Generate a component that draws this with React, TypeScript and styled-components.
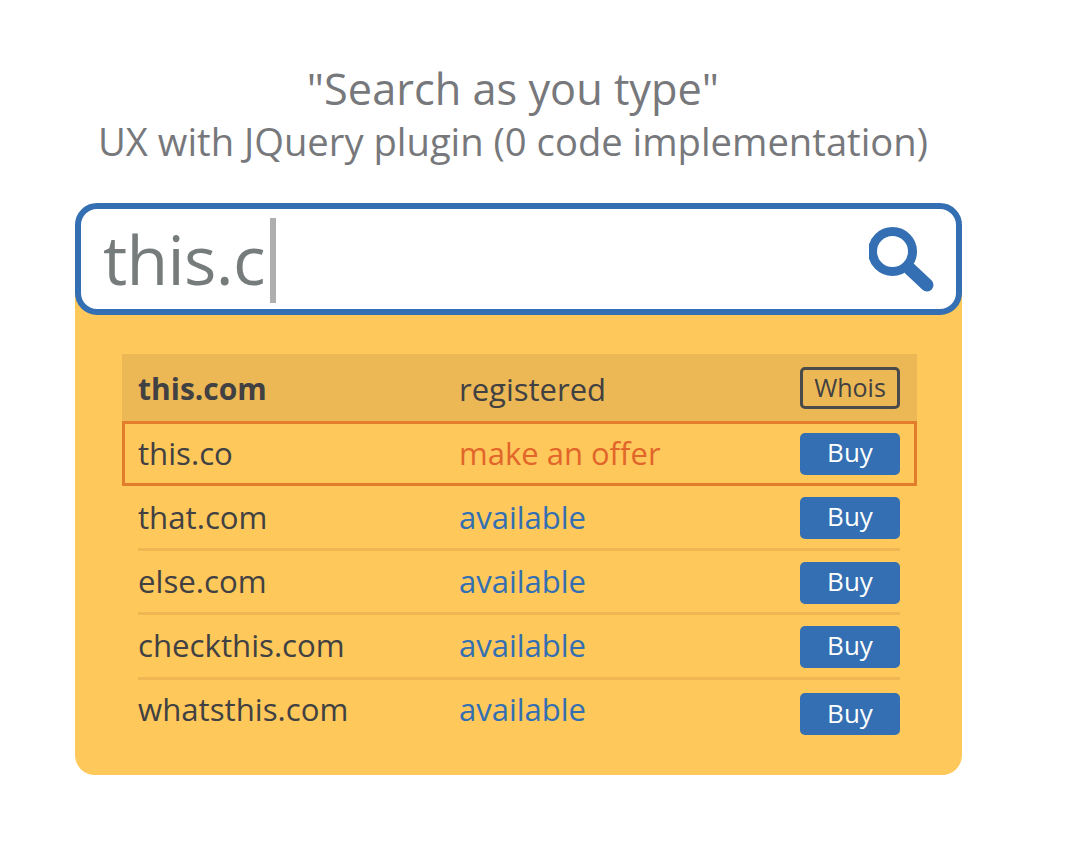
import styled, { createGlobalStyle } from "styled-components";

const GlobalStyle = createGlobalStyle`
  html, body {
    margin: 0;
    padding: 0;
    background: #ffffff;
  }
  body {
    font-family: "Open Sans", "Noto Sans", sans-serif;
  }
`;

const rows = [
  { domain: "that.com", nudge: 1 },
  { domain: "else.com", nudge: 2 },
  { domain: "checkthis.com", nudge: 2 },
  { domain: "whatsthis.com", nudge: 5 },
];

const SearchIcon = () => (
  <svg width="68" height="68" viewBox="0 0 68 68" fill="none">
    <circle cx="23.5" cy="26.5" r="20" stroke="#336fb2" strokeWidth="9" />
    <path d="M41 44 L58 60" stroke="#336fb2" strokeWidth="13" strokeLinecap="round" />
  </svg>
);

const App = () => {
  return (
    <Page>
      <GlobalStyle />
      <Header>
        <Title>"Search as you type"</Title>
        <Subtitle>UX with JQuery plugin (0 code implementation)</Subtitle>
      </Header>
      <Widget>
        <SearchBox>
          <Query>this.c</Query>
          <Caret />
          <IconSlot>
            <SearchIcon />
          </IconSlot>
        </SearchBox>
        <Dropdown>
          <Results>
            <TakenRow>
              <Domain $bold>this.com</Domain>
              <Status>registered</Status>
              <WhoisButton>Whois</WhoisButton>
            </TakenRow>
            <OfferRow>
              <Domain>this.co</Domain>
              <Status $color="#e2652a">make an offer</Status>
              <BuyButton $nudge={1}>Buy</BuyButton>
            </OfferRow>
            {rows.map((row, i) => (
              <Row key={row.domain} $last={i === rows.length - 1}>
                <Domain>{row.domain}</Domain>
                <Status $color="#336fb2">available</Status>
                <BuyButton $nudge={row.nudge}>Buy</BuyButton>
              </Row>
            ))}
          </Results>
        </Dropdown>
      </Widget>
    </Page>
  );
};

export default App;

const Page = styled.div`
  width: 1067px;
  height: 852px;
  overflow: hidden;
  padding: 61px 105px 0 75px;
  box-sizing: border-box;
  background: #ffffff;
`;

const Header = styled.div`
  display: flex;
  flex-direction: column;
  align-items: center;
  color: #77787b;
  padding-right: 11px;
  height: 142px;
`;

const Title = styled.div`
  font-size: 43.3px;
  line-height: 56px;
  white-space: nowrap;
`;

const Subtitle = styled.div`
  font-size: 38.2px;
  line-height: 48px;
  white-space: nowrap;
`;

const Widget = styled.div`
  width: 887px;
`;

const SearchBox = styled.div`
  position: relative;
  z-index: 1;
  display: flex;
  align-items: center;
  height: 112px;
  box-sizing: border-box;
  padding-left: 22px;
  background: #ffffff;
  border: 6px solid #336fb2;
  border-radius: 22px;
`;

const Query = styled.div`
  font-size: 68px;
  line-height: 1;
  color: #767b7c;
  letter-spacing: -0.7px;
`;

const Caret = styled.div`
  width: 6px;
  height: 85px;
  margin: 2px 0 0 5px;
  background: #aeaeae;
`;

const IconSlot = styled.div`
  display: flex;
  margin-left: auto;
  margin-right: 19px;
`;

const Dropdown = styled.div`
  margin-top: -56px;
  height: 516px;
  box-sizing: border-box;
  padding: 95px 45px 0 47px;
  background: #fec85a;
  border-radius: 0 0 20px 20px;
`;

const Results = styled.div`
  display: flex;
  flex-direction: column;
`;

const rowGrid = `
  display: grid;
  grid-template-columns: 322px 1fr 100px;
  align-items: center;
  box-sizing: border-box;
`;

const TakenRow = styled.div`
  ${rowGrid}
  height: 67px;
  padding: 2px 17px 0 16px;
  background: #ecb855;
`;

const OfferRow = styled.div`
  ${rowGrid}
  height: 65px;
  padding: 0 14px 2px 13px;
  border: 3px solid #e27d2b;
`;

const Row = styled.div<{ $last?: boolean }>`
  ${rowGrid}
  position: relative;
  height: 64.2px;
  margin: 0 17px 0 16px;
  padding-bottom: 3px;

  &::after {
    content: "";
    display: ${(p) => (p.$last ? "none" : "block")};
    position: absolute;
    left: 0;
    right: 0;
    bottom: -1px;
    height: 3px;
    background: #efb653;
  }
`;

const Domain = styled.div<{ $bold?: boolean }>`
  font-size: ${(p) => (p.$bold ? 30 : 31.2)}px;
  font-weight: ${(p) => (p.$bold ? 700 : 400)};
  color: #414042;
`;

const Status = styled.div<{ $color?: string }>`
  font-size: 31px;
  margin-left: -1px;
  color: ${(p) => p.$color || "#414042"};
`;

const BuyButton = styled.div<{ $nudge?: number }>`
  display: flex;
  align-items: center;
  justify-content: center;
  height: 42px;
  margin-top: ${(p) => (p.$nudge || 0) * 2}px;
  padding-bottom: 3px;
  box-sizing: border-box;
  border-radius: 5px;
  background: #336fb2;
  color: #ffffff;
  font-size: 26px;
`;

const WhoisButton = styled.div`
  display: flex;
  align-items: center;
  justify-content: center;
  height: 42px;
  margin-top: -1px;
  padding-bottom: 3px;
  box-sizing: border-box;
  border: 3px solid #4a4a4a;
  border-radius: 5px;
  color: #414042;
  font-size: 25px;
`;
